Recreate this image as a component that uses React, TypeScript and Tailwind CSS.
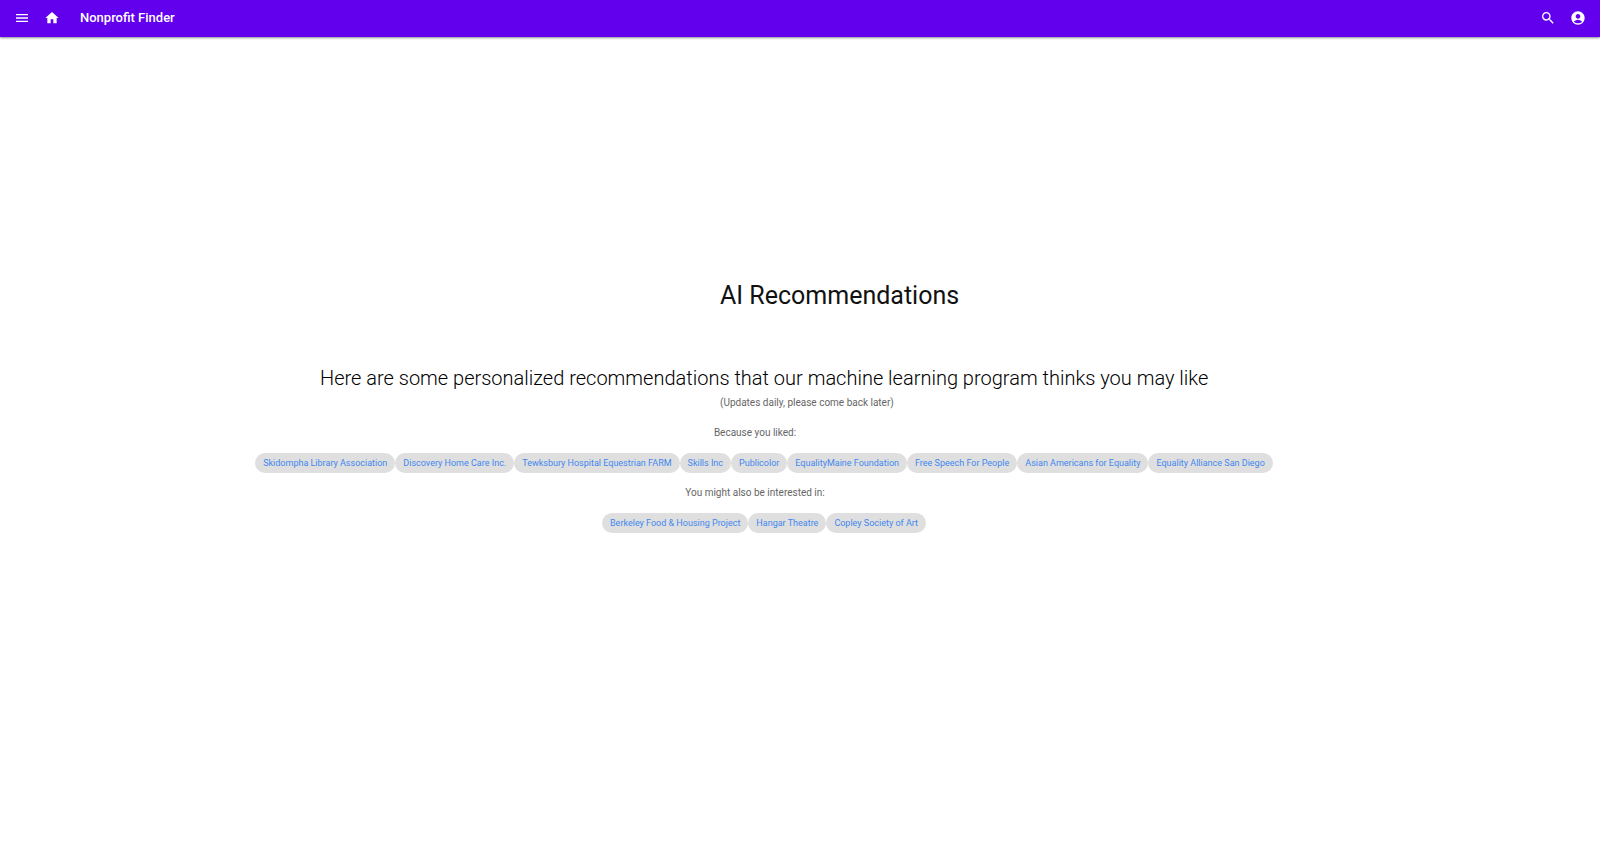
import { MdAccountCircle, MdHome, MdMenu, MdSearch } from "react-icons/md";

const liked = [
  "Skidompha Library Association",
  "Discovery Home Care Inc.",
  "Tewksbury Hospital Equestrian FARM",
  "Skills Inc",
  "Publicolor",
  "EqualityMaine Foundation",
  "Free Speech For People",
  "Asian Americans for Equality",
  "Equality Alliance San Diego",
];

const suggested = ["Berkeley Food & Housing Project", "Hangar Theatre", "Copley Society of Art"];

function ChipRow({ names }: { names: string[] }) {
  return (
    <ul className="flex flex-wrap justify-center pr-[72px]">
      {names.map((name) => (
        <li key={name} className="flex">
          <a
            href="#"
            className="flex h-5 items-center rounded-full bg-[#dfdfdf] px-2 pt-px text-[9px] whitespace-nowrap text-[#3f87f0]"
          >
            {name}
          </a>
        </li>
      ))}
    </ul>
  );
}

export default function App() {
  return (
    <div className="min-h-screen bg-white font-[Roboto,sans-serif] text-[#111111]">
      <header className="flex h-[37px] items-center bg-[#6200ee] pr-[14px] pb-[2px] pl-[14px] text-white shadow-[0_1px_2px_rgba(0,0,0,0.45)]">
        <button type="button" aria-label="Menu">
          <MdMenu size={16} />
        </button>
        <a href="#" aria-label="Home" className="ml-[14px]">
          <MdHome size={16} />
        </a>
        <span className="ml-5 text-[13px] font-medium">Nonprofit Finder</span>
        <button type="button" aria-label="Search" className="ml-auto">
          <MdSearch size={16} />
        </button>
        <button type="button" aria-label="Account" className="ml-[14px]">
          <MdAccountCircle size={16} />
        </button>
      </header>
      <main className="pt-[243px]">
        <h1 className="pl-[45%] text-[25px] leading-8">AI Recommendations</h1>
        <h2 className="mt-[50px] pl-[20%] text-[20px] leading-8 font-light text-black">
          Here are some personalized recommendations that our machine learning program thinks you may like
        </h2>
        <p className="mt-px pl-[45%] text-[10px] leading-4 text-[#666666]">(Updates daily, please come back later)</p>
        <p className="mt-[14px] mb-3 pr-[90px] text-center text-[10px] leading-4 text-[#666666]">
          Because you liked:
        </p>
        <ChipRow names={liked} />
        <p className="my-3 pr-[90px] text-center text-[10px] leading-4 text-[#666666]">
          You might also be interested in:
        </p>
        <ChipRow names={suggested} />
      </main>
    </div>
  );
}
